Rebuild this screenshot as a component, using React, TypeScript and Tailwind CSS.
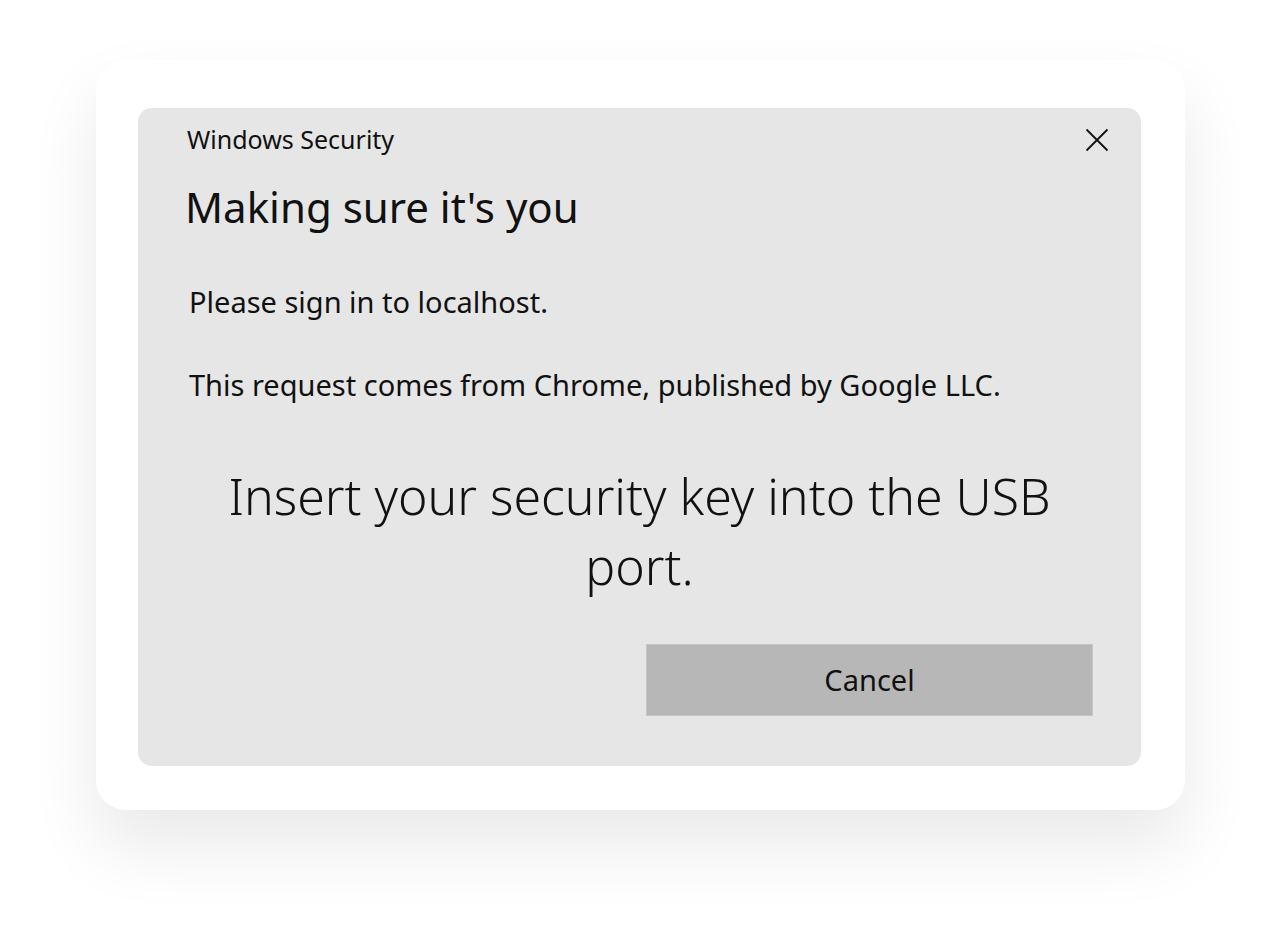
import React from "react";

export default function App() {
  return (
    <div
      className="w-[1281px] h-[943px] bg-white overflow-hidden text-[#111]"
      style={{ fontFamily: '"Noto Sans", "Open Sans", sans-serif' }}
    >
      <div className="pt-[60px] pl-[96px]">
        <div className="w-[1089px] h-[750px] bg-white rounded-[30px] shadow-[0_36px_70px_rgba(0,0,0,0.09)] pt-[48px] pl-[42px]">
          <div className="w-[1003px] h-[658px] bg-[#e6e6e6] rounded-[14px] flex flex-col px-[48px]">
            <div className="flex items-start justify-between pt-[16px]">
              <div className="text-[25px] leading-[30px] ml-[1px]">Windows Security</div>
              <button className="mt-[4px] -mr-[16px] w-[24px] h-[24px] flex items-center justify-center">
                <svg width="24" height="24" viewBox="0 0 24 24" fill="none" stroke="#111" strokeWidth="1.8">
                  <path d="M1.5 1.5 L22.5 22.5 M22.5 1.5 L1.5 22.5" />
                </svg>
              </button>
            </div>
            <div className="text-[42px] leading-[50px] mt-[28px] -ml-[1px]">Making sure it's you</div>
            <div className="text-[29px] leading-[36px] mt-[52px] ml-[3px]">Please sign in to localhost.</div>
            <div className="text-[29px] leading-[36px] mt-[47px] ml-[3px]">
              This request comes from Chrome, published by Google LLC.
            </div>
            <div className="text-[50px] leading-[70px] font-light text-center mt-[58px] px-[30px]">
              Insert your security key into the USB port.
            </div>
            <div className="flex justify-end mt-[43px]">
              <button className="w-[447px] h-[72px] bg-[#b7b7b7] border border-[#c6c6c6] text-[29px] text-[#111]">
                Cancel
              </button>
            </div>
          </div>
        </div>
      </div>
    </div>
  );
}
